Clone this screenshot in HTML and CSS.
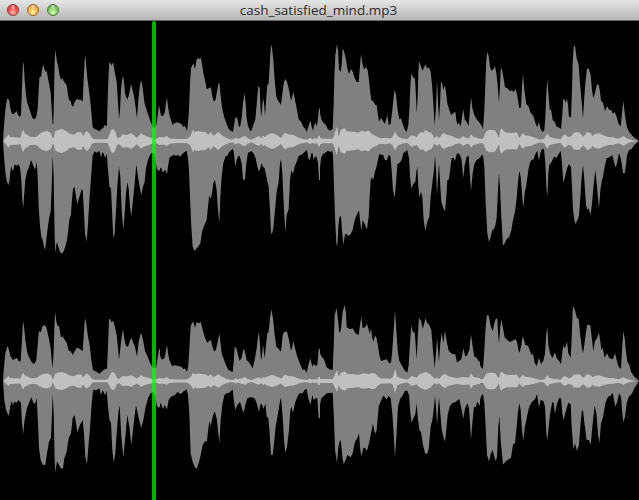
FILE: index.html
```
<!DOCTYPE html>
<html lang="en">
<head>
<meta charset="utf-8">
<title>cash_satisfied_mind.mp3</title>
<link rel="stylesheet" href="styles.css">
</head>
<body>
<main class="window">
<header class="titlebar">
  <div class="controls"><i class="light red"></i><i class="light yellow"></i><i class="light green"></i></div>
  <h1 class="title">cash_satisfied_mind.mp3</h1>
</header>
<section class="player">
<svg class="wave" viewBox="0 63 1917 1437" preserveAspectRatio="none">
<defs>
<path id="rmsA" d="M10,333 16,325 22,318 26,313 30,321 45,322 62,323 66,306 70,300 74,310 82,315 90,320 100,322 110,320 118,312 128,306 140,303 150,307 154,312 158,326 161,322 165,305 172,300 186,297 198,303 210,312 222,314 232,307 244,306 249,319 255,308 261,303 270,313 276,325 285,328 322,328 328,315 334,299 341,297 346,305 351,322 358,324 363,318 368,313 380,315 394,310 402,316 410,323 417,317 423,309 430,315 440,319 452,323 464,326 470,326 480,320 480,333Z"/>
<path id="rmsB" d="M0,333 0,322 12,322 20,318 28,325 50,327 80,327 90,320 95,310 100,299 104,307 112,303 125,305 136,306 145,314 152,306 160,317 168,312 175,305 183,314 195,322 212,329 220,328 227,323 235,327 245,322 255,317 263,325 275,329 288,322 297,318 304,325 309,317 315,321 320,316 328,312 336,309 345,312 355,318 364,324 370,313 376,308 384,313 400,315 410,320 420,325 440,329 450,324 458,328 464,325 472,327 475,318 480,316 480,333Z"/>
<path id="rmsC" d="M0,333 0,323 10,326 38,326 43,315 47,300 51,291 55,315 57,317 62,300 74,294 80,304 100,305 116,308 124,302 135,305 147,302 155,312 168,318 180,325 200,323 210,326 218,320 225,305 233,319 245,325 262,328 268,322 275,316 290,321 296,312 303,306 309,308 317,300 325,306 334,308 343,325 351,318 358,325 364,315 371,309 382,315 395,317 405,323 420,326 430,318 438,324 447,325 453,313 460,320 480,326 480,333Z"/>
<path id="rmsC2" d="M0,273 0,267 38,267 44,255 51,240 56,260 62,249 75,244 82,251 116,254 130,250 147,252 155,249 165,250 172,258 182,265 212,266 219,260 225,237 232,260 242,265 262,269 275,258 290,263 297,254 316,246 330,252 344,267 351,262 357,267 365,257 374,251 385,259 410,264 430,261 447,263 453,250 460,260 480,265 480,273Z"/>
<path id="rmsD" d="M0,333 0,326 9,326 15,312 20,303 30,299 45,301 50,310 57,323 61,300 65,295 72,304 80,308 105,308 111,307 118,324 124,315 130,309 135,316 150,318 165,323 180,329 193,326 198,316 202,310 208,320 220,324 242,328 248,318 255,313 265,322 275,318 281,308 290,306 300,308 309,320 315,314 321,306 330,308 338,318 345,312 357,310 370,316 385,321 400,322 415,326 425,322 431,318 440,325 455,330 477,333Z"/>
<g id="rms"><use href="#rmsA"/><use href="#rmsB" x="480"/><use href="#rmsC" x="960"/><use href="#rmsD" x="1440"/></g>
<g id="rms2"><g transform="matrix(1 0 0 .75 0 23.25)"><use href="#rmsA"/><use href="#rmsB" x="480"/><use href="#rmsD" x="1440"/></g><use href="#rmsC2" x="960"/></g>
</defs>
<g transform="translate(0 90)">
<g class="peak">
<path d="M9,333 12,285 16,240 20,212 23,205 27,210 31,235 36,252 40,253 45,248 50,243 54,255 59,260 63,255 66,170 69,98 71,100 74,150 78,195 82,220 87,233 92,248 97,263 101,267 106,266 110,255 113,235 116,180 118,145 121,137 123,144 127,115 130,103 133,116 136,125 140,123 144,145 148,165 152,188 155,235 158,285 160,280 162,200 164,90 166,58 168,75 171,96 174,106 178,132 183,150 187,144 192,155 198,162 201,170 205,200 208,212 211,210 215,225 219,231 223,218 228,210 232,206 236,211 240,208 245,212 248,215 251,150 254,90 256,75 259,110 262,145 266,175 270,205 274,245 278,292 284,297 290,299 298,304 305,297 311,292 315,283 318,290 321,285 323,210 325,150 328,97 331,99 334,107 337,100 340,100 344,125 350,155 353,200 357,268 360,240 363,180 366,150 369,138 372,155 375,190 379,203 383,208 388,190 393,162 397,178 402,198 406,225 411,265 415,210 420,165 424,150 428,175 434,222 440,240 446,258 452,275 458,290 464,295 469,285 474,250 477,225 480,240 480,333Z"/>
<path d="M9,333 12,380 16,425 20,452 25,465 28,455 31,425 34,408 37,422 40,420 44,403 49,408 55,403 60,412 64,450 67,510 70,533 72,500 76,450 81,425 87,412 93,390 97,400 103,415 106,418 110,395 113,440 116,530 120,588 124,620 128,630 132,650 135,660 139,630 143,595 148,560 152,545 155,470 158,375 161,440 164,620 166,670 168,650 171,635 175,650 180,665 185,671 190,665 196,650 201,630 205,600 208,568 213,555 215,520 219,477 224,470 228,500 232,521 236,508 240,495 245,478 248,480 251,530 255,610 260,635 264,580 269,500 274,430 278,375 284,364 290,368 295,365 298,362 303,382 307,366 311,371 316,386 318,374 321,374 323,410 326,440 328,470 333,475 336,540 340,625 344,610 348,540 352,470 357,410 361,440 365,540 370,600 374,550 378,490 382,457 386,475 390,530 394,560 398,520 403,470 409,403 414,440 419,470 424,496 429,470 434,455 438,415 444,390 450,375 456,368 462,370 467,395 470,415 475,423 480,420 480,333Z"/>
<g transform="translate(480 0)">
<path d="M0,333 0,240 3,257 10,257 15,245 18,220 21,202 24,230 28,255 32,268 38,285 43,280 50,277 60,280 66,284 70,290 75,288 81,303 84,280 87,240 90,160 93,115 96,108 100,100 105,118 110,88 114,84 118,88 122,83 125,95 130,130 136,155 140,178 146,175 153,172 156,195 161,214 166,212 171,185 175,162 178,157 181,190 184,215 188,242 193,262 200,282 206,296 213,303 219,305 223,280 226,263 231,262 236,287 240,292 245,265 249,220 254,190 257,220 260,265 264,287 270,302 274,302 280,285 286,268 290,225 293,185 296,166 299,175 303,262 306,240 309,203 312,220 315,258 319,200 322,165 326,160 330,90 333,43 336,55 340,90 344,150 349,200 354,212 363,224 367,190 372,155 376,147 381,155 387,180 393,212 396,203 400,185 404,205 410,235 416,268 424,277 430,290 436,298 440,305 444,295 448,280 452,272 455,290 459,302 463,285 467,278 471,290 475,255 477,237 480,235 480,333Z"/>
<path d="M0,333 0,413 4,415 9,430 13,420 16,421 21,433 24,410 28,385 34,378 42,375 48,377 54,375 60,380 67,372 73,367 80,362 84,385 87,420 90,500 94,590 98,650 104,663 110,655 116,648 121,640 126,605 132,588 140,570 145,520 148,496 152,508 156,490 160,460 165,450 170,480 174,540 178,580 181,500 185,440 190,400 197,378 202,378 206,368 212,362 218,356 221,365 226,410 230,390 235,378 239,378 245,400 249,448 255,450 259,400 264,368 270,366 274,363 280,370 287,385 292,410 297,425 301,415 304,400 309,410 314,415 319,440 323,458 326,470 330,540 333,608 336,612 340,595 345,540 350,485 356,455 360,400 363,387 367,430 372,540 376,606 380,555 386,538 390,450 394,420 399,432 404,410 410,395 416,378 424,374 430,370 436,364 441,360 445,385 450,390 454,370 458,370 461,390 465,380 470,380 474,400 477,450 480,450 480,333Z"/>
</g>
<g transform="translate(960 0)">
<path d="M0,333 0,250 4,268 10,278 18,285 24,298 30,302 38,297 41,220 43,140 46,75 51,43 54,60 57,118 62,126 65,105 68,58 71,60 76,80 82,115 87,132 93,117 98,125 104,145 110,155 116,157 119,120 123,72 127,100 132,118 138,112 143,120 147,150 151,190 154,210 160,215 166,225 170,225 174,255 177,275 183,263 188,272 194,282 198,270 202,255 206,285 212,282 217,240 221,200 224,180 228,195 233,240 238,268 243,265 249,285 255,300 260,305 265,285 268,240 271,170 274,130 279,142 285,146 288,200 290,250 293,200 295,130 297,93 302,108 308,122 313,110 316,103 321,115 327,113 332,125 336,165 340,220 344,288 348,230 351,152 354,215 357,270 360,225 363,155 366,158 370,180 375,165 378,190 382,220 388,240 394,256 400,250 406,245 409,270 412,284 417,278 422,290 426,262 430,238 434,268 440,277 446,287 449,250 453,200 457,235 463,255 470,268 480,280 480,333Z"/>
<path d="M0,333 0,413 3,385 8,373 16,368 24,362 30,366 36,363 39,375 42,470 45,560 49,640 52,650 55,590 58,562 63,558 66,600 70,645 75,612 80,612 86,618 92,612 98,600 104,570 110,555 117,540 120,570 124,602 128,570 133,580 141,598 146,560 149,500 152,450 156,440 159,452 165,425 170,408 175,385 178,372 183,374 189,374 195,391 201,390 206,375 211,378 215,420 219,480 224,503 228,460 232,403 239,398 245,390 250,370 256,365 262,360 267,385 270,440 274,475 280,462 286,455 289,425 292,410 295,470 298,502 303,485 307,500 311,570 316,602 322,575 328,560 332,500 338,450 342,420 345,375 348,420 351,495 354,440 357,400 361,470 364,515 370,535 375,543 379,500 382,450 387,448 391,415 395,385 400,383 405,393 411,370 418,372 424,385 430,445 434,405 440,380 446,377 450,440 453,483 458,430 463,402 470,390 480,383 480,333Z"/>
</g>
<g transform="translate(1440 0)">
<path d="M0,333 0,280 5,287 9,298 13,240 16,160 19,90 22,66 26,78 30,110 34,122 40,118 45,108 49,130 53,165 57,218 60,170 62,120 65,115 69,135 75,172 82,175 90,183 96,181 101,187 106,177 110,188 114,210 118,235 123,232 126,170 129,132 133,180 139,222 146,230 152,248 160,258 166,278 172,292 177,275 181,295 187,307 193,300 196,260 199,190 202,148 206,200 209,240 213,238 218,270 224,275 230,290 236,292 243,297 247,250 250,208 253,207 256,218 261,207 264,225 267,260 273,262 276,180 278,100 281,52 285,46 290,85 296,105 300,160 305,215 309,266 313,200 317,150 321,115 327,118 332,135 336,180 340,205 345,190 351,163 356,165 360,185 363,212 369,218 375,243 381,228 388,240 394,240 399,252 404,246 410,260 415,280 422,290 425,260 428,230 430,213 433,240 437,270 441,292 447,305 455,315 463,323 477,332Z"/>
<path d="M0,333 0,385 4,376 9,376 13,410 17,520 22,610 27,637 32,620 37,600 42,597 47,583 50,560 53,500 57,430 60,470 64,560 69,647 74,640 80,627 88,620 94,600 99,570 105,545 110,505 114,455 118,423 122,440 126,490 130,535 134,490 139,465 145,420 150,397 155,390 161,388 166,372 172,362 177,392 181,370 186,357 192,357 196,400 199,470 202,500 205,430 208,405 215,395 222,380 230,383 236,372 242,363 246,400 250,458 255,440 261,415 267,402 273,412 276,470 279,540 283,570 287,582 292,570 297,558 301,500 305,440 309,405 313,450 318,525 322,540 326,535 332,555 336,520 341,465 346,420 350,460 357,536 361,480 365,455 369,440 374,410 380,385 390,381 397,375 402,395 406,412 411,400 417,370 421,380 425,400 429,430 434,430 438,405 441,375 447,361 455,357 463,345 477,333Z"/>
</g>
</g>
<g class="rms"><use href="#rms"/><use href="#rms" transform="matrix(1 0 0 -1 0 666)"/></g>
</g>
<g transform="translate(0 870)">
<g class="peak">
<path d="M9,273 12,230 16,190 22,168 26,177 31,197 38,210 45,207 51,203 57,215 62,212 66,150 69,92 72,110 76,150 82,188 88,203 96,218 103,222 109,210 113,165 116,130 119,122 122,128 127,110 132,105 139,110 143,130 148,152 152,175 155,210 158,235 161,180 164,90 166,67 169,95 173,108 177,108 183,143 187,138 193,148 200,158 206,182 212,184 218,195 225,182 231,173 240,177 248,184 251,140 254,95 256,85 260,110 264,140 269,165 274,210 279,240 290,245 298,251 306,244 314,238 321,236 324,170 327,88 331,88 334,97 340,92 345,112 350,135 354,175 357,210 361,175 365,140 369,118 373,148 378,168 384,170 389,155 394,143 400,160 405,170 411,200 416,155 421,135 424,130 429,150 435,182 443,200 450,218 458,233 468,235 473,205 477,180 480,175 480,273Z"/>
<path d="M9,273 13,330 18,360 26,378 30,355 34,332 38,345 43,335 50,338 56,330 63,340 66,400 70,432 73,395 80,358 88,335 94,322 100,338 105,343 110,325 114,400 117,475 122,510 128,524 136,525 141,490 147,455 153,443 156,370 158,312 161,370 164,510 166,546 171,514 176,523 183,536 189,535 193,505 200,485 206,445 213,430 218,385 224,376 228,400 232,426 240,405 248,390 252,430 256,500 261,523 265,470 270,415 274,355 279,300 290,300 298,295 303,315 308,300 315,316 320,303 324,350 328,388 333,400 337,480 341,518 346,490 350,430 355,370 359,345 364,440 370,502 376,440 382,374 388,410 394,464 400,410 408,345 416,385 424,413 430,390 437,350 445,322 452,310 460,305 466,320 470,345 475,353 480,350 480,273Z"/>
<g transform="translate(480 0)">
<path d="M0,273 0,195 4,208 10,208 15,200 18,180 21,165 24,190 28,210 36,228 45,226 55,228 64,230 70,238 75,235 81,246 85,225 89,160 92,108 97,97 101,98 105,113 110,97 117,100 122,95 127,115 133,138 141,158 147,154 153,150 157,170 162,184 168,180 173,155 178,132 181,155 185,190 191,207 198,225 205,240 212,243 218,247 221,215 224,170 229,175 234,195 239,213 245,203 250,177 254,183 260,210 268,218 278,235 284,210 290,175 294,140 297,125 300,165 303,213 306,195 309,163 314,205 318,165 322,130 326,125 330,85 334,58 339,85 344,135 349,170 356,177 363,185 368,135 373,125 381,125 387,150 393,183 397,170 400,152 405,175 411,197 418,217 428,240 434,238 440,248 445,225 451,205 457,230 461,222 467,228 472,225 476,180 480,175 480,273Z"/>
<path d="M0,273 0,340 4,343 9,357 14,345 21,358 26,330 33,320 45,315 52,306 62,312 70,305 80,298 84,315 88,370 92,490 98,515 104,530 110,537 116,520 122,495 128,465 134,455 141,452 145,415 148,393 152,408 158,380 164,364 170,385 175,430 178,460 182,390 187,345 193,315 202,309 208,308 218,298 222,335 226,360 232,345 240,335 246,355 250,370 256,345 262,325 273,321 284,325 290,340 297,365 302,340 306,345 311,357 316,340 320,380 325,384 329,430 333,494 338,495 342,460 347,410 354,370 359,340 363,322 368,380 372,450 376,488 381,470 387,420 391,360 394,350 399,368 405,340 412,320 418,310 428,310 434,300 440,297 445,325 451,345 457,315 461,330 466,325 472,325 476,385 480,385 480,273Z"/>
</g>
<g transform="translate(960 0)">
<path d="M0,273 0,190 5,200 12,208 20,232 28,238 38,240 41,170 44,75 50,55 54,90 58,130 63,118 68,65 74,45 78,70 80,112 90,118 98,115 106,130 116,135 120,105 124,80 128,115 135,112 141,103 145,115 149,132 153,115 156,140 160,155 165,136 170,145 175,175 179,200 184,213 192,210 200,208 207,218 213,220 217,180 221,120 225,62 229,120 233,180 238,213 245,225 253,240 262,248 266,225 270,160 274,105 279,128 284,125 287,165 290,208 294,130 297,83 303,92 308,117 313,100 316,85 322,100 328,105 334,120 338,170 344,235 348,190 351,143 354,180 357,215 361,160 365,128 370,160 375,122 379,148 386,182 394,190 400,193 406,193 411,218 418,212 424,208 430,175 436,200 442,195 448,180 453,133 458,170 463,200 470,203 476,213 480,215 480,273Z"/>
<path d="M0,273 0,345 4,325 12,318 20,310 38,308 42,390 45,480 51,518 55,470 60,450 63,455 67,500 71,523 77,510 82,495 92,502 98,490 105,455 112,445 117,430 120,470 124,500 130,473 136,475 141,483 148,455 154,425 159,400 165,433 170,420 176,350 183,332 190,317 200,328 206,318 212,325 217,370 221,430 225,502 229,440 234,350 240,327 247,318 255,302 262,302 267,315 271,370 275,398 280,385 286,373 290,340 294,390 299,422 303,425 308,460 315,490 321,492 326,478 332,410 338,385 342,350 345,318 348,350 351,405 354,360 357,320 361,370 365,418 370,440 375,455 379,420 383,375 389,350 396,340 405,337 411,332 418,328 424,355 430,386 435,355 442,340 447,355 450,400 453,450 457,400 462,350 467,352 472,335 480,348 480,273Z"/>
</g>
<g transform="translate(1440 0)">
<path d="M0,273 0,225 4,233 9,236 13,180 17,110 21,75 26,77 32,108 38,124 43,100 48,84 52,88 55,140 57,160 61,110 64,88 69,115 74,142 82,150 90,156 98,152 106,147 111,155 115,180 119,188 124,165 128,138 132,150 136,165 144,167 149,180 154,195 159,192 164,218 170,229 177,203 183,222 190,213 195,190 199,130 202,112 205,165 210,190 217,205 225,187 230,205 237,212 243,222 247,185 250,167 255,175 261,155 265,190 272,203 275,150 278,60 281,48 286,65 291,85 296,86 300,130 305,170 309,190 313,165 318,125 322,103 331,107 335,140 340,184 345,152 351,145 357,128 361,155 364,180 368,173 374,203 381,190 388,205 399,208 405,190 410,210 416,230 423,236 426,180 430,124 434,145 438,185 442,215 448,225 453,245 463,260 477,272Z"/>
<path d="M0,273 0,330 4,318 9,312 13,340 17,410 21,495 27,514 33,490 38,480 43,500 47,513 51,500 55,410 58,378 62,450 69,524 75,516 83,510 93,503 99,463 105,460 110,410 114,365 118,340 122,360 126,420 130,452 134,415 140,385 147,352 155,337 165,328 171,312 177,350 182,330 190,333 195,350 199,430 202,453 206,410 211,365 217,335 221,340 225,372 230,345 237,325 243,325 247,370 251,390 257,365 265,338 272,342 275,410 280,478 285,460 291,482 297,465 301,410 305,365 309,360 314,405 320,450 327,450 332,465 337,410 344,347 349,370 354,430 358,460 363,400 369,382 376,340 384,320 391,318 398,308 402,330 406,350 412,335 417,310 423,320 427,370 430,397 435,380 440,340 446,320 455,312 463,295 477,273Z"/>
</g>
</g>
<g class="rms"><use href="#rms2"/><use href="#rms2" transform="matrix(1 0 0 -1 0 546)"/></g>
</g>
</svg>
<div class="playhead"></div>
</section>
</main>
</body>
</html>
```
FILE: styles.css
```
* { box-sizing: border-box; }
body { margin: 0; background: #000; }
.window { display: flex; flex-direction: column; width: 639px; height: 500px; overflow: hidden; }
.titlebar {
  display: grid;
  grid-template-columns: 100px 1fr 102px;
  align-items: center;
  height: 21px;
  border-bottom: 1px solid #686868;
  background: linear-gradient(#e6e6e6, #b6b6b6);
}
.controls { display: flex; gap: 8px; padding-left: 7px; }
.light { width: 12px; height: 12px; border-radius: 50%; border: 1px solid; }
.red { border-color: #8c3836; background: radial-gradient(ellipse at 50% 18%, #fff8 0 8%, transparent 32%), radial-gradient(circle at 50% 75%, #ffb2a8, #ec4a4a 55%, #c83a3a); }
.yellow { border-color: #986528; background: radial-gradient(ellipse at 50% 18%, #fff8 0 8%, transparent 32%), radial-gradient(circle at 50% 75%, #fff3a0, #f0ae45 55%, #d28a2c); }
.green { border-color: #4a7836; background: radial-gradient(ellipse at 50% 18%, #fff8 0 8%, transparent 32%), radial-gradient(circle at 50% 75%, #d9ffb0, #82c765 55%, #5da046); }
.title {
  margin: 0;
  text-align: center;
  white-space: nowrap;
  font: 400 13.5px/20px "Open Sans", "Noto Sans", sans-serif;
  color: #2c2c2c;
}
.player { position: relative; flex: 1; background: #000; }
.wave { display: block; width: 639px; height: 479px; }
.peak { fill: #808080; }
.rms { fill: #c0c0c0; }
.playhead {
  position: absolute;
  top: 0;
  bottom: 0;
  left: 152px;
  width: 4px;
  border-radius: 2px 2px 0 0;
  background: rgba(0, 255, 0, .72);
}
```
